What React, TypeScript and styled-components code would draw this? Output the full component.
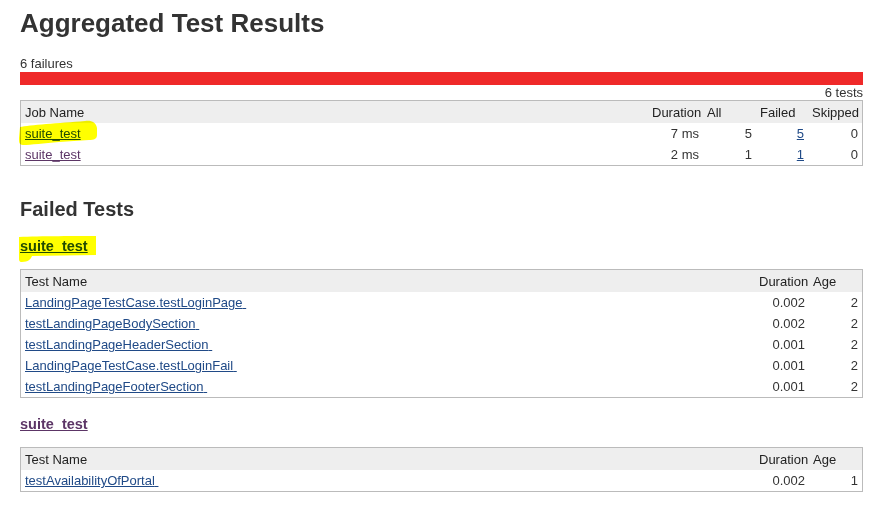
import styled, { createGlobalStyle } from "styled-components";

const GlobalStyle = createGlobalStyle`
  body {
    margin: 0;
    background: #fff;
    color: #333;
    font-family: "Liberation Sans", Arial, sans-serif;
    font-size: 13px;
  }
`;

const Page = styled.div`
  width: 843px;
  padding: 8px 20px 0;
`;

const Title = styled.h1`
  margin: 0;
  font-size: 26px;
  line-height: 30px;
  font-weight: bold;
`;

const Summary = styled.div`
  margin-top: 18px;
  line-height: 16px;
`;

const Bar = styled.div`
  height: 13px;
  background: #ef2929;
`;

const TestCount = styled.div`
  text-align: right;
  line-height: 15px;
`;

const Table = styled.table`
  box-sizing: border-box;
  width: 100%;
  table-layout: fixed;
  border-collapse: separate;
  border-spacing: 0;
  border: 1px solid #bbb;
`;

const Col = styled.col<{ $w?: number }>`
  width: ${(p) => (p.$w ? `${p.$w}px` : "auto")};
`;

const Th = styled.th`
  height: 22px;
  padding: 0 4px;
  background: #eee;
  color: #222;
  font-weight: normal;
  text-align: left;
  line-height: 15px;
  white-space: nowrap;
`;

const Td = styled.td<{ $right?: boolean }>`
  height: 21px;
  padding: 0 4px;
  line-height: 15px;
  text-align: ${(p) => (p.$right ? "right" : "left")};
  white-space: nowrap;
`;

const Link = styled.a<{ $visited?: boolean }>`
  color: ${(p) => (p.$visited ? "#5c3566" : "#204a87")};
  text-decoration: underline;
`;

const SectionTitle = styled.h2`
  margin: 32px 0 0;
  font-size: 20px;
  line-height: 22px;
  font-weight: bold;
`;

const SuiteTitle = styled.h3`
  margin: 18px 0 14px;
  font-size: 14.5px;
  line-height: 17px;
  font-weight: bold;
`;

const Marked = styled.span`
  position: relative;
  display: inline-block;
`;

const Marker = styled.svg<{ $x: number; $y: number }>`
  position: absolute;
  left: ${(p) => p.$x}px;
  top: ${(p) => p.$y}px;
  mix-blend-mode: multiply;
  pointer-events: none;
  overflow: visible;
`;

function RowMarker() {
  return (
    <Marker $x={-6} $y={-6} width={80} height={27} viewBox="0 0 80 27">
      <path
        d="M1 7 C10 5 40 3 66 1 C72 0 77 2 78 8 L78 15 C78 19 75 20 70 20 L40 22 C25 23 12 25 4 25 C0 25 0 22 0 18 Z"
        fill="#ffff00"
      />
    </Marker>
  );
}

function TitleMarker() {
  return (
    <Marker $x={-1} $y={-2} width={80} height={27} viewBox="0 0 80 27">
      <path
        d="M0 1 C20 0 60 0 77 0 L77 19 L13 20 C12 23 9 26 3 26 C0 26 0 24 0 22 Z"
        fill="#ffff00"
      />
    </Marker>
  );
}

const jobs = [
  { name: "suite_test", duration: "7 ms", all: 5, failed: 5, skipped: 0, visited: false },
  { name: "suite_test", duration: "2 ms", all: 1, failed: 1, skipped: 0, visited: true },
];

const suites = [
  {
    name: "suite_test",
    visited: false,
    tests: [
      { name: "LandingPageTestCase.testLoginPage", duration: "0.002", age: 2 },
      { name: "testLandingPageBodySection", duration: "0.002", age: 2 },
      { name: "testLandingPageHeaderSection", duration: "0.001", age: 2 },
      { name: "LandingPageTestCase.testLoginFail", duration: "0.001", age: 2 },
      { name: "testLandingPageFooterSection", duration: "0.001", age: 2 },
    ],
  },
  {
    name: "suite_test",
    visited: true,
    tests: [{ name: "testAvailabilityOfPortal", duration: "0.002", age: 1 }],
  },
];

export default function App() {
  return (
    <Page>
      <GlobalStyle />
      <Title>Aggregated Test Results</Title>
      <Summary>6 failures</Summary>
      <Bar />
      <TestCount>6 tests</TestCount>
      <Table>
        <colgroup>
          <Col />
          <Col $w={55} />
          <Col $w={53} />
          <Col $w={52} />
          <Col $w={54} />
        </colgroup>
        <thead>
          <tr>
            <Th>Job Name</Th>
            <Th>Duration</Th>
            <Th>All</Th>
            <Th>Failed</Th>
            <Th>Skipped</Th>
          </tr>
        </thead>
        <tbody>
          {jobs.map((job, i) => (
            <tr key={i}>
              <Td>
                {i === 0 ? (
                  <Marked>
                    <Link href="#" $visited={job.visited}>
                      {job.name}
                    </Link>
                    <RowMarker />
                  </Marked>
                ) : (
                  <Link href="#" $visited={job.visited}>
                    {job.name}
                  </Link>
                )}
              </Td>
              <Td $right>{job.duration}</Td>
              <Td $right>{job.all}</Td>
              <Td $right>
                <Link href="#">{job.failed}</Link>
              </Td>
              <Td $right>{job.skipped}</Td>
            </tr>
          ))}
        </tbody>
      </Table>

      <SectionTitle>Failed Tests</SectionTitle>
      {suites.map((suite, s) => (
        <div key={s}>
          <SuiteTitle>
            {s === 0 ? (
              <Marked>
                <Link href="#" $visited={suite.visited}>
                  {suite.name}
                </Link>
                <TitleMarker />
              </Marked>
            ) : (
              <Link href="#" $visited={suite.visited}>
                {suite.name}
              </Link>
            )}
          </SuiteTitle>
          <Table>
            <colgroup>
              <Col />
              <Col $w={54} />
              <Col $w={53} />
            </colgroup>
            <thead>
              <tr>
                <Th>Test Name</Th>
                <Th>Duration</Th>
                <Th>Age</Th>
              </tr>
            </thead>
            <tbody>
              {suite.tests.map((t, i) => (
                <tr key={i}>
                  <Td>
                    <Link href="#">
                      {t.name}
                      {"\u00a0"}
                    </Link>
                  </Td>
                  <Td $right>{t.duration}</Td>
                  <Td $right>{t.age}</Td>
                </tr>
              ))}
            </tbody>
          </Table>
        </div>
      ))}
    </Page>
  );
}
